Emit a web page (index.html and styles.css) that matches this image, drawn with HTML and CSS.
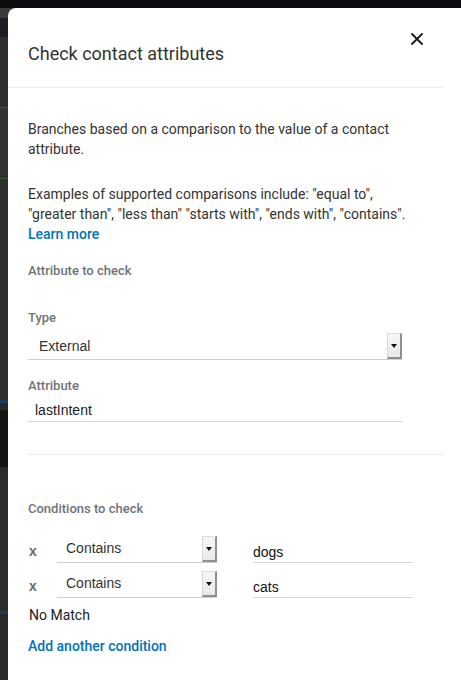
FILE: index.html
```html
<!DOCTYPE html>
<html lang="en">
<head>
<meta charset="utf-8">
<title>Check contact attributes</title>
<link rel="stylesheet" href="styles.css">
</head>
<body>
<div class="modal">
  <div class="modal-header">
    <h1 class="modal-title">Check contact attributes</h1>
    <button class="close-btn" aria-label="Close">
      <svg width="12" height="12" viewBox="0 0 12 12"><path d="M1 1 L11 11 M11 1 L1 11" stroke="#16191f" stroke-width="1.8" stroke-linecap="round" fill="none"/></svg>
    </button>
  </div>
  <div class="modal-body">
    <p class="desc">Branches based on a comparison to the value of a contact attribute.</p>
    <p class="desc desc-2">Examples of supported comparisons include: "equal to",<br>"greater than", "less than" "starts with", "ends with", "contains". <a class="link learn" href="#">Learn more</a></p>

    <div class="section section-attr">
      <div class="section-title">Attribute to check</div>
      <div class="field-label label-type">Type</div>
      <div class="select select-wide">
        <span class="select-text">External</span>
        <span class="select-btn"><span class="arrow"></span></span>
      </div>
      <div class="field-label label-attr">Attribute</div>
      <div class="text-input input-wide">lastIntent</div>
    </div>

    <div class="section-title cond-title">Conditions to check</div>
    <div class="cond-row">
      <span class="remove">x</span>
      <div class="select select-small">
        <span class="select-text">Contains</span>
        <span class="select-btn"><span class="arrow"></span></span>
      </div>
      <div class="value-input">dogs</div>
    </div>
    <div class="cond-row">
      <span class="remove">x</span>
      <div class="select select-small">
        <span class="select-text">Contains</span>
        <span class="select-btn"><span class="arrow"></span></span>
      </div>
      <div class="value-input">cats</div>
    </div>
    <div class="no-match">No Match</div>
    <a class="link add-link" href="#">Add another condition</a>
  </div>
</div>
</body>
</html>
```

FILE: styles.css
```css
* { box-sizing: border-box; }

html, body {
  margin: 0;
  height: 680px;
  overflow: hidden;
}

body {
  padding: 8px 0 0 8px;
  background: linear-gradient(to bottom,
    #0b0c0e 0, #0b0c0e 8px,
    #3b3b3b 8px, #3b3b3b 18px,
    #1b1e22 18px, #1b1e22 37px,
    #2f2f2f 37px, #2f2f2f 107px,
    #2e5a36 107px, #2e5a36 108px,
    #323232 108px, #323232 178px,
    #2e5a36 178px, #2e5a36 179px,
    #2e2e2e 179px, #2e2e2e 400px,
    #1d3a63 400px, #1d3a63 403px,
    #2a2a2a 403px, #2a2a2a 410px,
    #141414 410px, #141414 467px,
    #2c2c2c 467px, #2c2c2c 611px,
    #1d3a63 611px, #1d3a63 614px,
    #2a2a2a 614px, #2a2a2a 680px);
  font-family: Roboto, "Open Sans", Arial, sans-serif;
  color: #333;
}

.modal {
  width: 453px;
  height: 672px;
  background: #fff;
  border-radius: 8px 0 0 0;
}

.modal-header {
  height: 80px;
  margin-right: 18px;
  padding: 25px 20px 0 20px;
  border-bottom: 1px solid #eaeded;
  display: flex;
  justify-content: space-between;
  align-items: flex-start;
}

.modal-title {
  margin: 9px 0 0 0;
  font-size: 18px;
  line-height: 24px;
  font-weight: 400;
  color: #333;
}

.close-btn {
  width: 12px;
  height: 12px;
  padding: 0;
  border: 0;
  background: none;
  display: block;
}
.close-btn svg { display: block; }

.modal-body {
  padding: 31px 18px 0 20px;
}

.desc {
  margin: 0;
  font-size: 14px;
  line-height: 20px;
  color: #333;
  max-width: 400px;
}
.desc-2 { margin-top: 25px; }

.link {
  color: #0073bb;
  text-decoration: none;
  font-weight: 500;
}
.learn { display: block; }

.section-attr {
  border-bottom: 1px solid #eaeded;
  padding-bottom: 32px;
  margin-top: 18px;
}

.section-title {
  font-size: 13px;
  line-height: 18px;
  font-weight: 500;
  color: #6f7378;
}

.field-label {
  font-size: 13px;
  line-height: 18px;
  font-weight: 500;
  color: #6f7378;
}
.label-type { margin-top: 29px; }
.label-attr { margin-top: 17px; }

.select {
  display: flex;
  align-items: stretch;
  height: 27px;
  border-bottom: 1px solid #cfcfcf;
  font-family: "Liberation Sans", Arial, sans-serif;
  font-size: 14px;
  color: #333;
}
.select-wide { width: 374px; margin-top: 6px; }
.select-small { width: 160px; }

.select-text {
  flex: 1;
  display: flex;
  align-items: center;
  padding-left: 11px;
}
.select-small .select-text { padding-left: 9px; padding-bottom: 2px; }

.select-btn {
  width: 15px;
  background: linear-gradient(to bottom, #f7f7f7, #e9e9e9);
  border-left: 1px solid #d8d8d8;
  border-top: 1px solid #dcdcdc;
  border-right: 2px solid #8f8f8f;
  border-bottom: 2px solid #8f8f8f;
  display: flex;
  justify-content: center;
  padding-top: 10px;
}
.arrow {
  width: 0;
  height: 0;
  border-left: 3px solid transparent;
  border-right: 3px solid transparent;
  border-top: 4px solid #111;
}

.text-input {
  font-family: "Liberation Sans", Arial, sans-serif;
  font-size: 14px;
  color: #222;
  border-bottom: 1px solid #d5d5d5;
  height: 23px;
  padding: 0 0 0 7px;
  line-height: 22px;
  margin-top: 4px;
}
.input-wide { width: 374px; }

.cond-title { margin-top: 45px; }

.cond-row {
  display: flex;
  align-items: flex-end;
  margin-top: 8px;
}
.cond-title + .cond-row { margin-top: 18px; }

.remove {
  width: 29px;
  padding-left: 1px;
  align-self: center;
  padding-top: 2px;
  font-family: "Liberation Sans", Arial, sans-serif;
  font-weight: 700;
  font-size: 14px;
  color: #6a6a6a;
}

.value-input {
  width: 160px;
  margin-left: 36px;
  height: 21px;
  border-bottom: 1px solid #d5d5d5;
  font-family: "Liberation Sans", Arial, sans-serif;
  font-size: 14px;
  line-height: 20px;
  color: #111;
}

.no-match {
  margin-top: 7px;
  font-size: 14px;
  line-height: 20px;
  color: #222;
  padding-left: 1px;
}

.add-link {
  display: inline-block;
  margin-top: 11px;
  font-size: 14px;
  line-height: 20px;
}
```
